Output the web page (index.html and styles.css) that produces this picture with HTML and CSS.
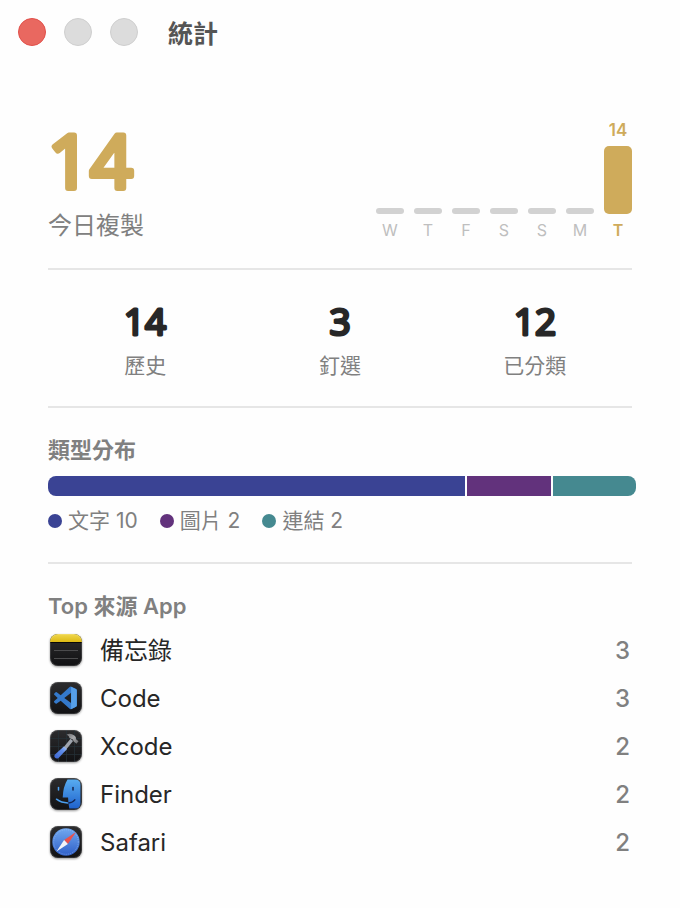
FILE: index.html
```
<!DOCTYPE html>
<html lang="zh-Hant">
<head>
<meta charset="utf-8">
<meta name="viewport" content="width=device-width, initial-scale=1">
<title>統計</title>
<link rel="stylesheet" href="styles.css">
</head>
<body>
<header class="titlebar">
  <div class="controls">
    <button class="control control-close" type="button" aria-label="關閉"></button>
    <button class="control" type="button" aria-label="縮小" disabled></button>
    <button class="control" type="button" aria-label="放大" disabled></button>
  </div>
  <h1 class="title">統計</h1>
</header>
<main class="content">
  <section class="today">
    <div>
      <p><svg class="rounded today-count"><text x="0" y="80">14</text></svg></p>
      <p class="today-label">今日複製</p>
    </div>
    <ol class="chart">
      <li class="day"><span class="bar"></span><span class="day-name">W</span></li>
      <li class="day"><span class="bar"></span><span class="day-name">T</span></li>
      <li class="day"><span class="bar"></span><span class="day-name">F</span></li>
      <li class="day"><span class="bar"></span><span class="day-name">S</span></li>
      <li class="day"><span class="bar"></span><span class="day-name">S</span></li>
      <li class="day"><span class="bar"></span><span class="day-name">M</span></li>
      <li class="day day-current"><span class="bar-value">14</span><span class="bar"></span><span class="day-name">T</span></li>
    </ol>
  </section>

  <dl class="totals">
    <div class="total"><dt>歷史</dt><dd><svg class="rounded total-count"><text x="50%" y="41">14</text></svg></dd></div>
    <div class="total"><dt>釘選</dt><dd><svg class="rounded total-count"><text x="50%" y="41">3</text></svg></dd></div>
    <div class="total"><dt>已分類</dt><dd><svg class="rounded total-count"><text x="50%" y="41">12</text></svg></dd></div>
  </dl>

  <section class="types">
    <h2 class="heading">類型分布</h2>
    <div class="stack">
      <span class="text-type" style="flex-grow: 10"></span>
      <span class="image-type" style="flex-grow: 2"></span>
      <span class="link-type" style="flex-grow: 2"></span>
    </div>
    <ul class="legend">
      <li><i class="dot text-type"></i>文字 10</li>
      <li><i class="dot image-type"></i>圖片 2</li>
      <li><i class="dot link-type"></i>連結 2</li>
    </ul>
  </section>

  <section class="sources">
    <h2 class="heading">Top 來源 App</h2>
    <ol class="apps">
      <li class="app">
        <svg class="app-icon" viewBox="0 0 36 36" aria-hidden="true">
          <defs>
            <linearGradient id="dark" x2="0" y2="1"><stop stop-color="#2c2c2e"/><stop offset="1" stop-color="#111113"/></linearGradient>
            <linearGradient id="yellow" x2="0" y2="1"><stop stop-color="#f0d850"/><stop offset="1" stop-color="#dcb912"/></linearGradient>
            <clipPath id="tile"><rect x="2" y="2" width="32" height="32" rx="8"/></clipPath>
          </defs>
          <g clip-path="url(#tile)">
            <path fill="url(#dark)" d="M2 2h32v32H2z"/>
            <path fill="url(#yellow)" d="M2 2h32v8H2z"/>
            <path stroke="#080808" d="M2 10.5h32"/>
            <path stroke="#4b4b4d" d="M6 18.5h24M6 26.5h24"/>
          </g>
          <rect class="tile-edge" x="2.5" y="2.5" width="31" height="31" rx="7.5"/>
        </svg>
        <span class="app-name">備忘錄</span><span class="app-count">3</span>
      </li>
      <li class="app">
        <svg class="app-icon" viewBox="0 0 36 36" aria-hidden="true">
          <rect x="2" y="2" width="32" height="32" rx="8" fill="url(#dark)"/>
          <g transform="translate(6 6.5) scale(.95)">
            <path fill="#3479cb" d="M23.15 2.587L18.21.21a1.494 1.494 0 0 0-1.705.29l-9.46 8.63-4.12-3.128a.999.999 0 0 0-1.276.057L.327 7.261A1 1 0 0 0 .326 8.74L3.899 12 .326 15.26a1 1 0 0 0 .001 1.479L1.65 17.94a.999.999 0 0 0 1.276.057l4.12-3.128 9.46 8.63a1.492 1.492 0 0 0 1.704.29l4.942-2.377A1.5 1.5 0 0 0 24 20.06V3.939a1.5 1.5 0 0 0-.85-1.352zm-5.146 14.861L10.826 12l7.178-5.448v10.896z"/>
            <path fill="#569fe8" d="M18.004.15 23.15 2.587A1.5 1.5 0 0 1 24 3.939V20.06a1.5 1.5 0 0 1-.85 1.352L18.004 23.85z"/>
          </g>
          <rect class="tile-edge" x="2.5" y="2.5" width="31" height="31" rx="7.5"/>
        </svg>
        <span class="app-name">Code</span><span class="app-count">3</span>
      </li>
      <li class="app">
        <svg class="app-icon" viewBox="0 0 36 36" aria-hidden="true">
          <defs>
            <linearGradient id="handle" x1="1" x2="0" y2="1"><stop stop-color="#b4ccf5"/><stop offset=".35" stop-color="#608eea"/><stop offset="1" stop-color="#3a62cc"/></linearGradient>
            <linearGradient id="steel" x2="1" y2="1"><stop stop-color="#68696c"/><stop offset=".5" stop-color="#a8a9ac"/><stop offset="1" stop-color="#646568"/></linearGradient>
          </defs>
          <rect x="2" y="2" width="32" height="32" rx="8" fill="url(#dark)"/>
          <path d="M10.5 2v32M18.5 2v32M26.5 2v32M2 10.5h32M2 18.5h32M2 26.5h32" stroke="#25323a" stroke-width=".7"/>
          <path d="m22.5 10.8 2.6 2.2-8.6 10.5-2.5-2.2z" fill="#9fa4ad"/>
          <path d="m15.8 18.4 3.2 2.7-8.4 8.8q-2 1.2-3.6-.2-1.4-1.4-.3-3z" fill="url(#handle)"/>
          <path d="M18.5 6.5q4-2 7.5.7l1.8 1.8.3 2.2 2.4 2-2 2.6-2.8-2.3-.9-2-2.3-1.1q-1.6-.7-1.5-2-1-.9-2.500-1.900z" fill="url(#steel)"/>
          <rect class="tile-edge" x="2.5" y="2.5" width="31" height="31" rx="7.5"/>
        </svg>
        <span class="app-name">Xcode</span><span class="app-count">2</span>
      </li>
      <li class="app">
        <svg class="app-icon" viewBox="0 0 36 36" aria-hidden="true">
          <defs><linearGradient id="face" x2="0" y2="1"><stop stop-color="#58acf0"/><stop offset="1" stop-color="#1f62cc"/></linearGradient></defs>
          <rect x="2" y="2" width="32" height="32" rx="8" fill="url(#dark)"/>
          <path d="M19.5 3.5H27q5.5 0 5.5 5.5v18q0 5.5-5.5 5.5h-5.7q-1.1-5-1.2-11h-5.4q.4-11 4.8-18z" fill="url(#face)"/>
          <path d="M10.5 11.4v2.6" stroke="#4b9ff0" stroke-width="1.5" stroke-linecap="round"/>
          <path d="M25 11.4v2.6" stroke="#14254d" stroke-width="1.5" stroke-linecap="round"/>
          <path d="M8.5 23.2q5.2 3.9 11.9 3.7" fill="none" stroke="#4b9ff0" stroke-width="1.5" stroke-linecap="round"/>
          <path d="M20.6 26.9q4.2-.3 6.2-3" fill="none" stroke="#122451" stroke-width="1.5" stroke-linecap="round"/>
          <rect class="tile-edge" x="2.5" y="2.5" width="31" height="31" rx="7.5"/>
        </svg>
        <span class="app-name">Finder</span><span class="app-count">2</span>
      </li>
      <li class="app">
        <svg class="app-icon" viewBox="0 0 36 36" aria-hidden="true">
          <defs><linearGradient id="compass" x2="0" y2="1"><stop stop-color="#71a8ef"/><stop offset="1" stop-color="#2f5fc8"/></linearGradient></defs>
          <rect x="2" y="2" width="32" height="32" rx="8" fill="url(#dark)"/>
          <circle cx="18" cy="18" r="13.7" fill="url(#compass)"/>
          <circle cx="18" cy="18" r="12.3" fill="none" stroke="#a8c8f4" stroke-dasharray=".6 1.4" opacity=".8"/>
          <path d="m28 8-11.9 8.1 3.8 3.8z" fill="#e9514d"/>
          <path d="m8.5 27.5 7.6-11.4 3.8 3.8z" fill="#f2f4f8"/>
          <rect class="tile-edge" x="2.5" y="2.5" width="31" height="31" rx="7.5"/>
        </svg>
        <span class="app-name">Safari</span><span class="app-count">2</span>
      </li>
    </ol>
  </section>
</main>
</body>
</html>
```

FILE: styles.css
```
* { box-sizing: border-box; }

body, h1, h2, p, dl, dd, ol, ul { margin: 0; padding: 0; }

ol, ul { list-style: none; }

body {
  background: #fefefe;
  color: #272727;
  font-family: Inter, "Noto Sans CJK TC", sans-serif;
}

.titlebar {
  display: flex;
  align-items: center;
  gap: 30px;
  height: 64px;
  padding: 0 18px;
}

.controls { display: flex; gap: 18px; }

.control {
  width: 28px;
  height: 28px;
  padding: 0;
  border: 1px solid #cfcfcf;
  border-radius: 50%;
  background: #dcdcdc;
}

.control-close { border-color: #e2504a; background: #e96860; }

.title {
  padding-top: 4px;
  color: #555;
  font-size: 25px;
  font-weight: 700;
  line-height: 32px;
}

.content { padding: 44px 48px 32px; }

.today {
  display: flex;
  justify-content: space-between;
  align-items: flex-end;
  padding-bottom: 28px;
  border-bottom: 2px solid #e6e6e6;
}

/* A round-joined outline softens the corners of the large figures. */
.rounded {
  display: block;
  fill: currentColor;
  stroke: currentColor;
  stroke-linejoin: round;
  font-family: "Open Sans", sans-serif;
  font-weight: 400;
}

.today-count {
  width: 120px;
  height: 104px;
  color: #cfab5b;
  font-size: 74px;
  stroke-width: 6px;
}

.today-label {
  color: #808080;
  font-size: 24px;
  line-height: 28px;
}

.chart {
  display: flex;
  align-items: flex-end;
  gap: 10px;
}

.day {
  display: flex;
  flex-direction: column;
  align-items: center;
  width: 28px;
  color: #bfbfbf;
  font-size: 16px;
  line-height: 20px;
}

.bar {
  width: 100%;
  height: 6px;
  margin-bottom: 6px;
  border-radius: 3px;
  background: #d2d2d2;
}

.day-current { color: #cfab5b; font-weight: 600; }

.day-current .bar {
  height: 68px;
  border-radius: 5px;
  background: #cfab5b;
}

.bar-value { margin-bottom: 6px; font-size: 17px; }

.totals {
  display: flex;
  padding: 24px 0 22px;
  border-bottom: 2px solid #e6e6e6;
}

.total {
  display: flex;
  flex: 1;
  flex-direction: column-reverse;
  align-items: center;
}

.total dt {
  color: #808080;
  font-size: 21px;
  line-height: 36px;
}

.total-count {
  width: 100px;
  height: 54px;
  font-size: 37px;
  stroke-width: 3px;
  text-anchor: middle;
}

.types {
  padding: 24px 0;
  border-bottom: 2px solid #e6e6e6;
}

.heading {
  color: #808080;
  font-size: 22px;
  font-weight: 600;
  line-height: 36px;
}

.stack {
  display: flex;
  gap: 2px;
  height: 20px;
  margin: 8px -4px 8px 0;
  overflow: hidden;
  border-radius: 8px;
}

.text-type { background: #3a4394; }
.image-type { background: #62327c; }
.link-type { background: #458990; }

.legend {
  display: flex;
  gap: 22px;
  color: #808080;
  font-size: 21px;
  line-height: 34px;
}

.legend li { display: flex; align-items: center; gap: 6px; }

.dot { width: 14px; height: 14px; border-radius: 50%; }

.sources { padding-top: 24px; }

.apps { padding-top: 2px; }

.app {
  display: flex;
  align-items: center;
  gap: 16px;
  height: 48px;
  padding-right: 2px;
}

.app-icon {
  width: 36px;
  height: 36px;
  filter: drop-shadow(0 1px 1px #0006);
}

.tile-edge { fill: none; stroke: #fff2; }

.app-name,
.app-count {
  padding-top: 2px;
  font-size: 24px;
  line-height: 36px;
}

.app-name { flex: 1; }

.app-count { color: #808080; font-weight: 500; }
```
